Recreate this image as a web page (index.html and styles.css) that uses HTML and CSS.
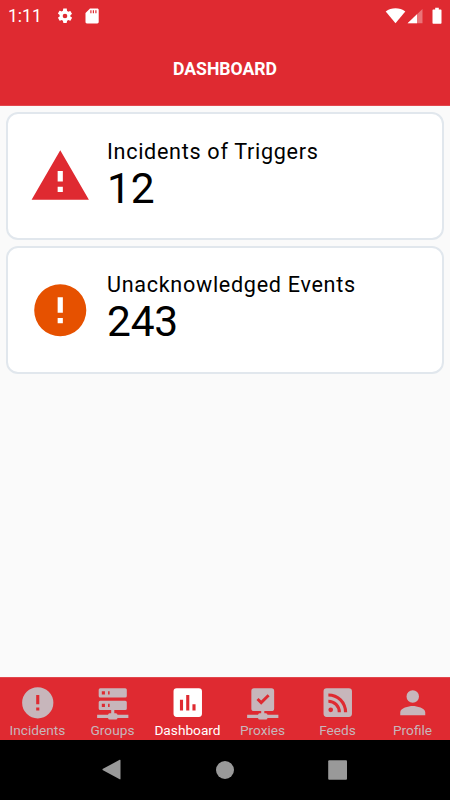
FILE: index.html
```html
<!DOCTYPE html>
<html lang="en">
<head>
<meta charset="utf-8">
<title>Dashboard</title>
<link rel="stylesheet" href="styles.css">
</head>
<body>
<header class="header">
  <div class="status">
    <span class="time">1:11</span>
    <svg class="gear" viewBox="0 0 24 24"><path d="M19.14 12.94c.04-.3.06-.61.06-.94s-.02-.64-.07-.94l2.03-1.58a.49.49 0 0 0 .12-.61l-1.92-3.32a.49.49 0 0 0-.59-.22l-2.39.96a7 7 0 0 0-1.62-.94l-.36-2.54A.48.48 0 0 0 13.92 2h-3.84c-.24 0-.43.17-.47.41l-.36 2.54a7 7 0 0 0-1.62.94l-2.39-.96a.49.49 0 0 0-.59.22L2.74 8.47a.48.48 0 0 0 .12.61l2.03 1.58a6 6 0 0 0 0 1.88l-2.03 1.58a.49.49 0 0 0-.12.61l1.92 3.32c.12.22.37.29.59.22l2.39-.96c.5.38 1.03.7 1.62.94l.36 2.54c.05.24.24.41.48.41h3.84c.24 0 .44-.17.47-.41l.36-2.54a7 7 0 0 0 1.62-.94l2.39.96c.22.08.47 0 .59-.22l1.92-3.32a.48.48 0 0 0-.12-.61l-2.01-1.58zM12 15.1a3.1 3.1 0 1 1 0-6.2 3.1 3.1 0 0 1 0 6.2z"/></svg>
    <svg class="sdcard" viewBox="0 0 14 16"><path d="M5 .5h7.3c.8 0 1.4.6 1.4 1.4v12.2c0 .8-.6 1.4-1.4 1.4H1.900c-.8 0-1.400-.6-1.400-1.400V5zM5.300 2.300v3h1.200v-3zm2.500 0v3H9v-3zm2.500 0v3h1.200v-3z" fill-rule="evenodd"/></svg>
    <svg class="signals" viewBox="0 0 58 18">
      <path d="M.7 4.500C6.300.1 14.700.1 20.300 4.500L10.500 16.200z"/>
      <path d="M37.500 2v14.200h-15z" opacity=".35"/>
      <path d="M32 7.300v8.900h-9.400z"/>
      <path d="M48.200 2.500h2V.8h3.600v1.700h2c.4 0 .7.300.7.700v12.800c0 .4-.3.700-.7.700h-7.600c-.4 0-.7-.3-.7-.7V3.200c0-.4.3-.7.7-.7z"/>
    </svg>
  </div>
  <h1 class="title">DASHBOARD</h1>
</header>
<main class="content">
  <section class="card">
    <svg class="card-icon incident" viewBox="0 0 24 24"><path d="M1 21h22L12 2 1 21zm12-3h-2v-2h2v2zm0-4h-2v-4h2v4z"/></svg>
    <div class="card-text"><div class="label">Incidents of Triggers</div><div class="value">12</div></div>
  </section>
  <section class="card">
    <svg class="card-icon event" viewBox="0 0 24 24"><path d="M12 2a10 10 0 1 0 0 20 10 10 0 0 0 0-20zm1 15h-2v-2h2v2zm0-4h-2V7h2v6z"/></svg>
    <div class="card-text event-text"><div class="label">Unacknowledged Events</div><div class="value">243</div></div>
  </section>
</main>
<nav class="tabs">
  <a class="tab"><svg viewBox="0 0 24 24"><path d="M12 2a10 10 0 1 0 0 20 10 10 0 0 0 0-20zm1 15h-2v-2h2v2zm0-4h-2V7h2v6z"/></svg><span>Incidents</span></a>
  <a class="tab"><svg viewBox="0 -.7 24 24"><path d="M13 18h1a1 1 0 0 1 1 1h7v2h-7a1 1 0 0 1-1 1h-4a1 1 0 0 1-1-1H2v-2h7a1 1 0 0 1 1-1h1v-2H4a1 1 0 0 1-1-1v-4a1 1 0 0 1 1-1h16a1 1 0 0 1 1 1v4a1 1 0 0 1-1 1h-7v2M4 2h16a1 1 0 0 1 1 1v4a1 1 0 0 1-1 1H4a1 1 0 0 1-1-1V3a1 1 0 0 1 1-1m5 4h1V4H9v2m0 8h1v-2H9v2M5 4v2h2V4H5m0 8v2h2v-2H5z"/></svg><span>Groups</span></a>
  <a class="tab active"><svg viewBox="0 0 24 24"><path d="M19.100 2.700H4.900a2 2 0 0 0-2 2v14.400a2 2 0 0 0 2 2h14.200a2 2 0 0 0 2-2V4.700a2 2 0 0 0-2-2zM9 17H7v-7h2v7zm4 0h-2V7h2v10zm4 0h-2v-4h2v4z"/></svg><span>Dashboard</span></a>
  <a class="tab"><svg viewBox="0 0 24 24"><path d="M13 18.700h1a1 1 0 0 1 1 1h7v2h-7a1 1 0 0 1-1 1h-4a1 1 0 0 1-1-1H2v-2h7a1 1 0 0 1 1-1h1v-1.400H6.400a1.700 1.700 0 0 1-1.700-1.700V4.400a1.700 1.700 0 0 1 1.700-1.700h11.200a1.700 1.700 0 0 1 1.700 1.700v11.200a1.700 1.700 0 0 1-1.700 1.700H13v1.400M8 10.200l3 3 5.400-5.400-1.300-1.300-4.100 4.100-1.700-1.700z" fill-rule="evenodd"/></svg><span>Proxies</span></a>
  <a class="tab"><svg viewBox="0 0 24 24"><path d="M4.900 2.700h14.200a2 2 0 0 1 2 2v14.400a2 2 0 0 1-2 2H4.900a2 2 0 0 1-2-2V4.700a2 2 0 0 1 2-2M7.500 15A1.500 1.500 0 0 0 6 16.500 1.500 1.500 0 0 0 7.500 18 1.500 1.500 0 0 0 9 16.500 1.500 1.500 0 0 0 7.500 15M6 10v2a6 6 0 0 1 6 6h2a8 8 0 0 0-8-8m0-4v2a10 10 0 0 1 10 10h2A12 12 0 0 0 6 6z" fill-rule="evenodd"/></svg><span>Feeds</span></a>
  <a class="tab"><svg viewBox="0 0 24 24"><path d="M12 12a4 4 0 1 0 0-8 4 4 0 0 0 0 8zm0 2c-2.670 0-8 1.340-8 4v2h16v-2c0-2.660-5.330-4-8-4z"/></svg><span>Profile</span></a>
</nav>
<footer class="system">
  <svg viewBox="0 0 20 22"><path d="M18.500 1.200v18.600c0 .5-.4.700-.8.500L1 11.300c-.7-.4-.7-1.100 0-1.500L17.700.8c.4-.3.800 0 .8.400z"/></svg>
  <svg viewBox="0 0 20 22"><circle cx="10" cy="11" r="9"/></svg>
  <svg viewBox="0 0 20 22"><rect x=".2" y="1.300" width="18.800" height="19.400" rx="1"/></svg>
</footer>
</body>
</html>
```

FILE: styles.css
```css
* { box-sizing: border-box; }
body {
  margin: 0;
  width: 450px;
  height: 800px;
  display: flex;
  flex-direction: column;
  background: #fafafa;
  font-family: Roboto, sans-serif;
  overflow: hidden;
}
svg { display: block; flex: none; fill: currentColor; }
.header {
  height: 106px;
  background: #df2a31;
  border-bottom: 1px solid #e2474d;
  color: #fff;
}
.status { height: 31px; display: flex; align-items: center; padding: 0 7px 0 8px; }
.time { font-size: 17.500px; width: 48px; line-height: 31px; padding-top: 1px; }
.gear { width: 18px; height: 18px; }
.sdcard { width: 14px; height: 16px; margin-left: 11px; }
.signals { width: 58px; height: 18px; margin-left: auto; }
.title { margin: 25px 0 0; font-size: 17.600px; line-height: 26px; font-weight: 700; text-align: center; }
.content { flex: 1; padding: 6px; display: flex; flex-direction: column; gap: 6px; }
.card {
  height: 128px;
  display: flex;
  background: #fff;
  border: 2px solid #e1e7ed;
  border-radius: 12px;
  padding: 0 21px;
}
.card-icon { width: 62.500px; height: 62.500px; margin-top: 31.200px; }
.incident { color: #df2a31; }
.event { color: #e65100; margin-top: 30.500px; }
.card-text { margin-left: 15.500px; padding-top: 23px; color: #000; }
.event-text { padding-top: 22px; }
.label { font-size: 21.600px; line-height: 29px; letter-spacing: .69px; white-space: nowrap; }
.value { font-size: 42.500px; line-height: 45px; letter-spacing: -.2px; }
.tabs {
  height: 63px;
  display: grid;
  grid-template-columns: repeat(6, 1fr);
  background: #df2a31;
  border-top: 1px solid #e2474d;
}
.tab { display: flex; flex-direction: column; align-items: center; padding-top: 6px; color: #c7b6bb; }
.tab svg { width: 37.500px; height: 37.500px; }
.tab span { font-size: 13.700px; line-height: 17px; letter-spacing: 0; }
.active { color: #fff; }
.system {
  height: 60px;
  display: flex;
  justify-content: center;
  align-items: center;
  gap: 93px;
  background: #000;
  color: #999;
}
.system svg { width: 20px; height: 22px; }
```
